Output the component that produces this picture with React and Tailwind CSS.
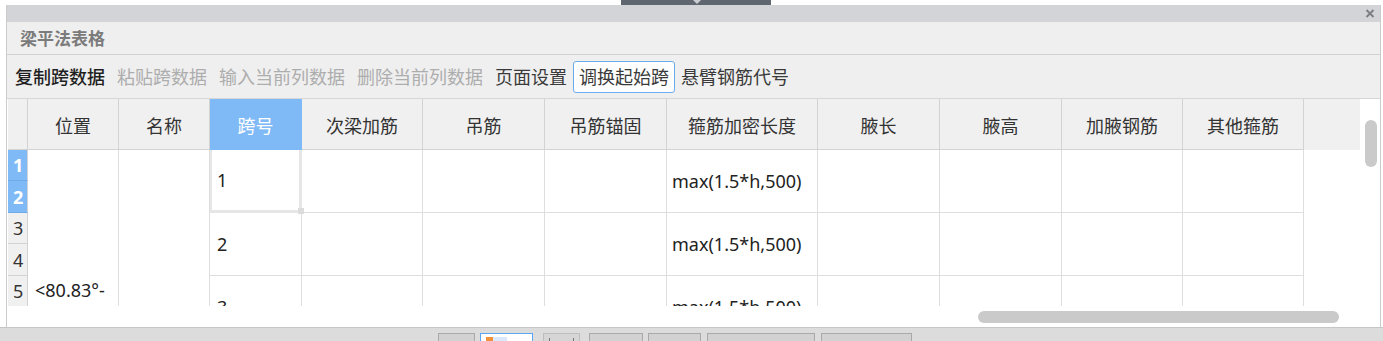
export default function App() {
  const heads = [
    { t: '位置', w: 'w-[91px]' },
    { t: '名称', w: 'w-[91px]' },
    { t: '跨号', w: 'w-[92px]', blue: true },
    { t: '次梁加筋', w: 'w-[121px]' },
    { t: '吊筋', w: 'w-[122px]' },
    { t: '吊筋锚固', w: 'w-[122px]' },
    { t: '箍筋加密长度', w: 'w-[151px]' },
    { t: '腋长', w: 'w-[122px]' },
    { t: '腋高', w: 'w-[122px]' },
    { t: '加腋钢筋', w: 'w-[121px]' },
    { t: '其他箍筋', w: 'w-[121px]' },
  ];
  const dataCols = heads.slice(3);
  const rowNums = [
    { n: '1', h: 'h-[31px]', sel: true },
    { n: '2', h: 'h-[32px]', sel: true },
    { n: '3', h: 'h-[31px]' },
    { n: '4', h: 'h-[32px]' },
    { n: '5', h: 'h-[31px]' },
  ];
  const tools = [
    { t: '复制跨数据', c: 'text-[#1f1f1f] font-medium' },
    { t: '粘贴跨数据', c: 'text-[#adadad]' },
    { t: '输入当前列数据', c: 'text-[#adadad]' },
    { t: '删除当前列数据', c: 'text-[#adadad]' },
    { t: '页面设置', c: 'text-[#3a3a3a]' },
    { t: '调换起始跨', c: 'text-[#3a3a3a]', box: true },
    { t: '悬臂钢筋代号', c: 'text-[#3a3a3a]' },
  ];
  const spans = ['1', '2', '3'];

  return (
    <div className="w-[1383px] h-[341px] overflow-hidden bg-white flex flex-col font-['Noto_Sans','Noto_Sans_CJK_SC',sans-serif] text-[18px] leading-none">
      {/* top strip */}
      <div className="h-[5px] shrink-0 flex pl-[621px] bg-white">
        <div className="w-[150px] h-[5px] bg-[#5f6670] flex justify-center pl-[2px]">
          <div className="w-0 h-0 border-l-[4px] border-r-[4px] border-t-[4px] border-l-transparent border-r-transparent border-t-[#c9ccd1]" />
        </div>
      </div>

      {/* panel */}
      <div className="ml-[6px] mr-[2px] h-[322px] shrink-0 border-x border-[#cbcbcb] flex flex-col">
        {/* title bar */}
        <div className="h-[17px] bg-[#d3d4d8] flex items-center justify-end pr-[5px]">
          <svg width="10" height="9" viewBox="0 0 10 9">
            <path d="M1.5 1 L8.5 8 M8.5 1 L1.5 8" stroke="#7d7f84" strokeWidth="2" />
          </svg>
        </div>
        {/* header */}
        <div className="h-[33px] bg-[#efefef] border-b border-[#d2d2d2] flex items-center pl-[13px]">
          <span className="text-[#7b7b7b] font-semibold text-[17px] pt-[1px]">梁平法表格</span>
        </div>
        {/* toolbar */}
        <div className="h-[43px] bg-[#efefef] flex items-center pl-[2px]">
          {tools.map((b) => (
            <div
              key={b.t}
              className={
                b.box
                  ? 'h-[32px] px-[5px] flex items-center border border-[#6aaef2] rounded-[3px] bg-white ' + b.c
                  : 'h-[32px] px-[5px] flex items-center border border-transparent ' + b.c
              }
            >
              {b.t}
            </div>
          ))}
        </div>
        {/* table area */}
        <div className="h-[229px] border-t border-[#d6d6d6] bg-white flex pl-[1px]">
          <div className="w-[1352px] flex flex-col">
            {/* header row */}
            <div className="h-[51px] flex bg-[#f0f0f0]">
              <div className="w-[20px] h-full border-r border-b border-[#d3d3d3]" />
              {heads.map((h) => (
                <div
                  key={h.t}
                  className={
                    h.w +
                    ' h-full flex items-center justify-center pt-[4px] border-r border-b ' +
                    (h.blue
                      ? 'bg-[#80baf6] text-white border-[#80baf6] border-b-[#80baf6]'
                      : 'text-[#333333] border-[#d3d3d3]')
                  }
                >
                  {h.t}
                </div>
              ))}
              <div className="flex-1 h-full" />
            </div>
            {/* body */}
            <div className="h-[156px] overflow-hidden flex">
              <div className="w-[20px] shrink-0 flex flex-col">
                {rowNums.map((r) => (
                  <div
                    key={r.n}
                    className={
                      r.h +
                      ' shrink-0 flex items-center pl-[5px] border-r border-b ' +
                      (r.sel
                        ? 'bg-[#80baf6] text-white font-bold border-r-[#d3d3d3] border-b-[#6ea9e8]'
                        : 'bg-[#f0f0f0] text-[#333333] border-[#d3d3d3]')
                    }
                  >
                    {r.n}
                  </div>
                ))}
              </div>
              <div className="w-[91px] shrink-0 border-r border-[#dedede] pt-[131px] pl-[7px] text-[#222222] whitespace-nowrap overflow-hidden">
                &lt;80.83°-
              </div>
              <div className="w-[91px] shrink-0 border-r border-[#dedede]" />
              <div className="w-[92px] shrink-0 flex flex-col">
                {spans.map((s, i) => (
                  <div
                    key={s}
                    className={
                      i === 0
                        ? 'relative h-[63px] shrink-0 flex items-center pl-[5px] border-l-2 border-r-[3px] border-b-[3px] border-[#e6e6e6] text-[#222222]'
                        : 'h-[63px] shrink-0 flex items-center pl-[7px] border-r border-b border-[#dedede] text-[#222222]'
                    }
                  >
                    {s}
                    {i === 0 && (
                      <div className="absolute right-[-5px] bottom-[-4px] w-[6px] h-[6px] bg-[#dcdcdc]" />
                    )}
                  </div>
                ))}
              </div>
              {dataCols.map((c) => (
                <div key={c.t} className={c.w + ' shrink-0 flex flex-col'}>
                  {spans.map((s) => (
                    <div
                      key={s}
                      className="h-[63px] shrink-0 flex items-center pl-[5px] border-r border-b border-[#dedede] text-[#222222] whitespace-nowrap"
                    >
                      {c.t === '箍筋加密长度' ? 'max(1.5*h,500)' : ''}
                    </div>
                  ))}
                </div>
              ))}
            </div>
            {/* horizontal scrollbar */}
            <div className="h-[21px] pt-[5px] pl-[970px]">
              <div className="w-[361px] h-[12px] rounded-full bg-[#cacaca]" />
            </div>
          </div>
          {/* vertical scrollbar */}
          <div className="w-[20px] pt-[21px] pl-[5px]">
            <div className="w-[12px] h-[47px] rounded-full bg-[#cacaca]" />
          </div>
        </div>
      </div>

      {/* bottom strip */}
      <div className="flex-1 border-t border-[#c6c6c6] bg-[#dcdcdc] flex items-start pt-[5px] pl-[438px]">
        <div className="w-[37px] h-[20px] border border-[#a9a9a9] bg-[#d2d2d2]" />
        <div className="ml-[5px] w-[53px] h-[20px] border border-[#5aa6f2] bg-white flex pt-[3px] pl-[5px]">
          <div className="w-[7px] h-[8px] bg-[#f0923a]" />
          <div className="w-[14px] h-[8px] bg-[#d9e9fb]" />
        </div>
        <div className="ml-[10px] w-[37px] h-[20px] border border-[#bdbdbd] bg-[#d6d6d6] flex justify-between px-[5px] pt-[4px]">
          <div className="w-[1px] h-[6px] bg-[#777777]" />
          <div className="w-[1px] h-[6px] bg-[#777777]" />
        </div>
        <div className="ml-[9px] w-[54px] h-[20px] border border-[#a9a9a9] bg-[#d2d2d2]" />
        <div className="ml-[5px] w-[53px] h-[20px] border border-[#a9a9a9] bg-[#d2d2d2]" />
        <div className="ml-[6px] w-[108px] h-[20px] border border-[#a9a9a9] bg-[#d2d2d2]" />
        <div className="ml-[6px] w-[91px] h-[20px] border border-[#a9a9a9] bg-[#d2d2d2]" />
      </div>
    </div>
  );
}
